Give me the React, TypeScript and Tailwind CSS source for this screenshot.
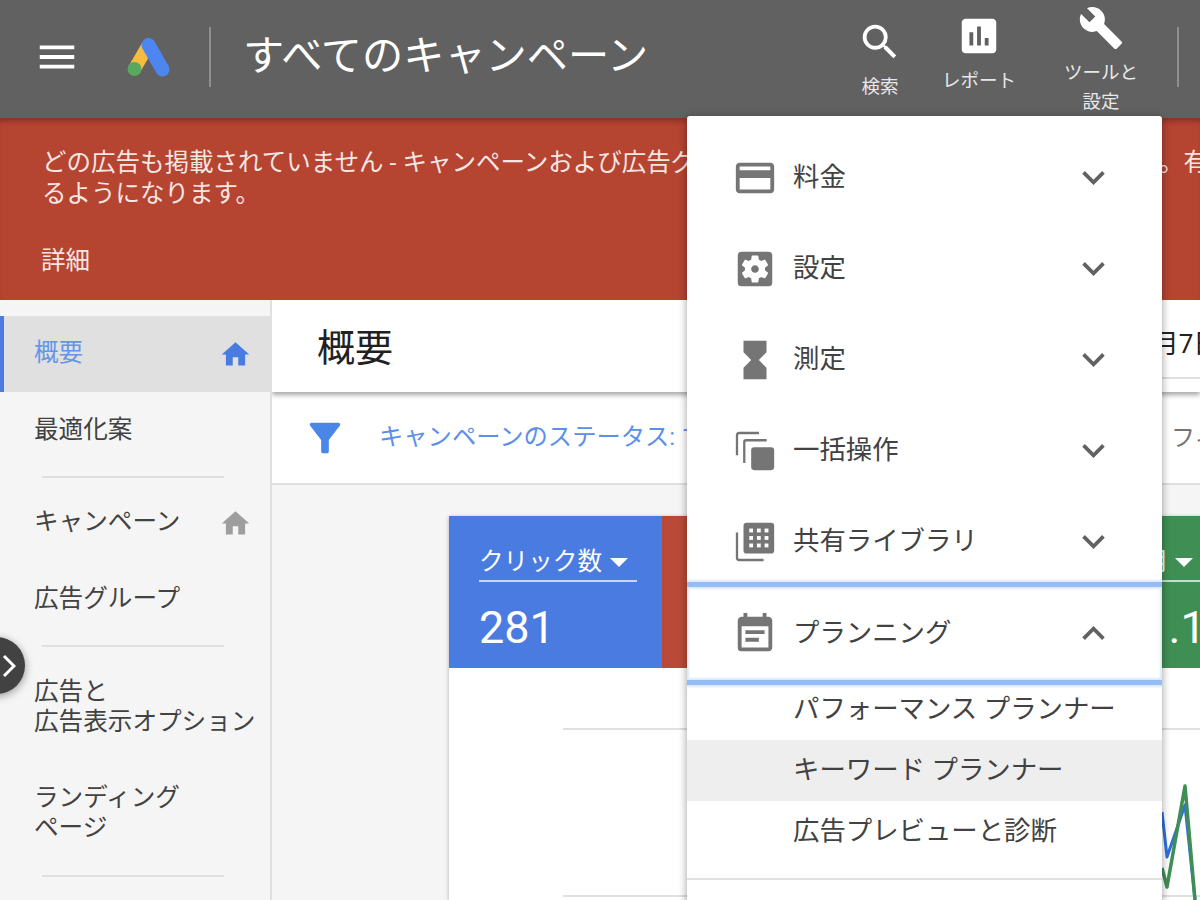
import type { ReactNode } from "react";
import {
  MdAssessment,
  MdBuild,
  MdCreditCard,
  MdEventNote,
  MdExpandLess,
  MdExpandMore,
  MdFilterAlt,
  MdHome,
  MdHourglassFull,
  MdMenu,
  MdSearch,
  MdSettingsApplications,
} from "react-icons/md";

function BulkIcon({ className }: { className?: string }) {
  return (
    <svg viewBox="0 0 24 24" className={className} fill="none" stroke="currentColor" strokeWidth="1.2">
      <path d="M2.6 14.2V3.6a1 1 0 0 1 1-1h10.5" />
      <path d="M6.4 18.2V7.4a1 1 0 0 1 1-1h10.7" />
      <rect x="10" y="10" width="12" height="12" rx="1.6" fill="currentColor" stroke="none" />
    </svg>
  );
}

function LibraryIcon({ className }: { className?: string }) {
  const dots = [9, 13, 17];
  const rows = [5, 8.9, 12.8];
  return (
    <svg viewBox="0 0 24 24" className={className} fill="none" stroke="currentColor" strokeWidth="1.2">
      <path d="M2.6 7v13.4a1 1 0 0 0 1 1H16.5" />
      <rect x="6" y="2" width="16" height="16" rx="1.6" fill="currentColor" stroke="none" />
      {rows.map((y) =>
        dots.map((x) => <rect key={`${x}-${y}`} x={x} y={y} width="2" height="2" fill="#fff" stroke="none" />),
      )}
    </svg>
  );
}

function AdsLogo() {
  return (
    <svg viewBox="0 0 43 39" className="ml-[47px] h-[39px] w-[43px] shrink-0">
      <path d="M21 7.5 7.5 31" stroke="#f4bc41" strokeWidth="13" fill="none" />
      <path d="M21.5 7 35.5 31.5" stroke="#4d86f0" strokeWidth="14" strokeLinecap="round" fill="none" />
      <circle cx="7.5" cy="31" r="7" fill="#5aa85d" />
    </svg>
  );
}

const headerTools = [
  { icon: <MdSearch className="h-[46px] w-[46px]" />, label: ["検索"], width: "w-[60px]", top: "pt-[19px]" },
  { icon: <MdAssessment className="h-[46px] w-[46px]" />, label: ["レポート"], width: "w-[90px] ml-[24px]", top: "pt-[13px]" },
  { icon: <MdBuild className="h-[46px] w-[46px]" />, label: ["ツールと", "設定"], width: "w-[100px] ml-[27px]", top: "pt-[5px]" },
];

const menuRows: { icon: ReactNode; label: string }[] = [
  { icon: <MdCreditCard className="h-[46px] w-[46px]" />, label: "料金" },
  { icon: <MdSettingsApplications className="h-[46px] w-[46px]" />, label: "設定" },
  { icon: <MdHourglassFull className="h-[46px] w-[46px]" />, label: "測定" },
  { icon: <BulkIcon className="h-[46px] w-[46px]" />, label: "一括操作" },
  { icon: <LibraryIcon className="h-[46px] w-[46px]" />, label: "共有ライブラリ" },
];

function Divider({ className }: { className: string }) {
  return <div className={`mx-[42px] h-[2px] w-[182px] bg-[#e0e0e0] ${className}`} />;
}

function Sidebar() {
  const rowClass = "flex h-[76px] items-center justify-between pl-[34px] pr-[18px] text-[24.6px] text-[#424242]";
  return (
    <aside className="h-full w-[272px] shrink-0 border-r-2 border-[#e0e0e0] bg-[#f5f5f5] pt-[16px]">
      <div className="flex h-[76px] items-center justify-between border-l-4 border-[#4a7be0] bg-[#e0e0e0] pb-[2px] pl-[30px] pr-[18px] text-[24.6px] text-[#6495ea]">
        概要
        <MdHome className="mt-[2px] h-[33px] w-[33px] text-[#4a7be0]" />
      </div>
      <div className={rowClass}>最適化案</div>
      <Divider className="mt-[8px]" />
      <div className="h-[7px]" />
      <div className={`${rowClass} pb-[1px]`}>
        キャンペーン
        <MdHome className="mt-[1px] h-[33px] w-[33px] text-[#9e9e9e]" />
      </div>
      <div className={rowClass}>広告グループ</div>
      <Divider className="mt-[8px]" />
      <div className="flex h-[112px] flex-col justify-center pl-[34px] pt-[8px] text-[24.6px] leading-[30px] text-[#424242]">
        <span>広告と</span>
        <span className="whitespace-nowrap">広告表示オプション</span>
      </div>
      <div className="flex h-[106px] flex-col justify-center pl-[34px] pt-[1px] text-[24.6px] leading-[30px] text-[#424242]">
        <span>ランディング</span>
        <span>ページ</span>
      </div>
      <Divider className="mt-[10px]" />
    </aside>
  );
}

function MetricTab({ bg, title, value }: { bg: string; title: string; value: string }) {
  return (
    <div className={`h-[152px] w-[213px] shrink-0 pl-[30px] pt-[28px] text-white ${bg}`}>
      <div className="flex h-[38px] w-[158px] items-center gap-[8px] border-b-2 border-white/70 text-[24.6px]">
        {title}
        <span className="h-0 w-0 border-x-[9px] border-t-[9px] border-x-transparent border-t-white" />
      </div>
      <div className="mt-[16px] text-[45px] leading-[60px]">{value}</div>
    </div>
  );
}

function Overview() {
  return (
    <main className="h-full min-w-0 flex-1 overflow-hidden bg-[#f5f5f5]">
      <div className="relative z-10 flex h-[92px] bg-white pl-[45px] shadow-[0_3px_5px_rgba(0,0,0,0.35)]">
        <h1 className="w-[722px] shrink-0 self-center pt-[4px] text-[38px] font-normal text-[#212121]">概要</h1>
        <div className="flex h-[79px] w-[300px] shrink-0 items-center whitespace-nowrap border-b-2 border-[#e0e0e0] pt-[11px] text-[26px] text-[#212121]">
          2018年11月7日
        </div>
      </div>
      <div className="flex h-[93px] items-center whitespace-nowrap border-b-2 border-[#e0e0e0] bg-white pl-[30px]">
        <MdFilterAlt className="h-[46px] w-[46px] shrink-0 text-[#4a86e8]" />
        <span className="ml-[31px] w-[792px] shrink-0 text-[24.3px] text-[#5b8fe8]">キャンペーンのステータス: すべて</span>
        <span className="text-[24px] text-[#757575]">フィルタ</span>
      </div>
      <div className="ml-[177px] mt-[31px] w-[852px] bg-white shadow-[0_1px_4px_rgba(0,0,0,0.3)]">
        <div className="flex">
          <MetricTab bg="bg-[#4a7be0]" title="クリック数" value="281" />
          <MetricTab bg="bg-[#b94a38]" title="表示回数" value="1.2万" />
          <MetricTab bg="bg-[#f4b400]" title="平均掲載順位" value="2.4" />
          <MetricTab bg="bg-[#3f8f55]" title="費用" value="11.1" />
        </div>
        <svg viewBox="0 0 852 232" className="block h-[232px] w-[852px]" fill="none">
          <path d="M114 61H852M114 228H852" stroke="#e0e0e0" strokeWidth="2" />
          <path d="M713 144 718 189 736 137 746 232" stroke="#2f6fde" strokeWidth="3" strokeLinejoin="round" />
          <path d="M713 200 718 219 736 118 746 232" stroke="#3f8f55" strokeWidth="3.5" strokeLinejoin="round" />
        </svg>
      </div>
    </main>
  );
}

function ToolsMenu() {
  return (
    <div className="absolute left-[687px] top-[116px] z-30 h-[800px] w-[475px] overflow-hidden rounded-[3px] bg-white pt-[16px] text-[26.4px] text-[#424242] shadow-[0_2px_8px_rgba(0,0,0,0.4)]">
      {menuRows.map((row) => (
        <div key={row.label} className="flex h-[91px] items-center pl-[45px] pr-[46px]">
          <span className="shrink-0 text-[#757575]">{row.icon}</span>
          <span className="ml-[15px] flex-1">{row.label}</span>
          <MdExpandMore className="h-[45px] w-[45px] text-[#616161]" />
        </div>
      ))}
      <div className="relative z-10 flex h-[93px] items-center bg-white pl-[45px] pr-[46px] shadow-[0_0_0_5px_#94bdf6,0_0_2px_7px_#dce9fb,inset_0_0_2px_2px_#dce9fb]">
        <MdEventNote className="h-[46px] w-[46px] shrink-0 text-[#757575]" />
        <span className="ml-[15px] flex-1">プランニング</span>
        <MdExpandLess className="h-[45px] w-[45px] text-[#616161]" />
      </div>
      <div className="flex h-[60px] items-center whitespace-pre pl-[106px]">パフォーマンス プランナー</div>
      <div className="flex h-[61px] items-center whitespace-pre bg-[#eeeeee] pl-[106px]">キーワード プランナー</div>
      <div className="flex h-[61px] items-center pl-[106px]">広告プレビューと診断</div>
      <div className="mt-[16px] h-[2px] bg-[#e0e0e0]" />
    </div>
  );
}

export default function App() {
  return (
    <div className="relative flex h-[900px] w-[1200px] flex-col overflow-hidden bg-[#f5f5f5] font-[Roboto,'Noto_Sans_CJK_JP',sans-serif]">
      <header className="relative z-20 flex h-[118px] shrink-0 items-start bg-[#616161] text-white">
        <div className="flex h-[114px] items-center pl-[34px]">
          <MdMenu className="h-[46px] w-[46px] shrink-0" />
          <AdsLogo />
          <div className="ml-[39px] h-[60px] w-[2px] bg-[#8f8f8f]" />
          <div className="ml-[32px] whitespace-nowrap text-[41.2px]">すべてのキャンペーン</div>
        </div>
        <div className="ml-auto flex items-start pr-[21px]">
          {headerTools.map((tool) => (
            <div key={tool.label[0]} className={`flex flex-col items-center ${tool.width} ${tool.top}`}>
              {tool.icon}
              <div className="mt-[8px] text-center text-[18.5px] leading-[29px] text-[#e8e8e8]">
                {tool.label.map((line) => (
                  <div key={line} className="whitespace-nowrap">{line}</div>
                ))}
              </div>
            </div>
          ))}
          <div className="ml-[26px] mt-[27px] h-[60px] w-[2px] bg-[#8f8f8f]" />
        </div>
      </header>

      <section className="h-[182px] shrink-0 overflow-hidden whitespace-nowrap bg-[#b54431] pl-[42px] pt-[29px] text-[24.5px] leading-[31px] text-[#f5e6e3] shadow-[inset_0_6px_6px_-4px_rgba(0,0,0,0.35)]">
        <div>どの広告も掲載されていません - キャンペーンおよび広告グループ がすべて一時停止中になっています。有効にすると広告が掲載され</div>
        <div>るようになります。</div>
        <div className="-ml-[1px] mt-[36px]">詳細</div>
      </section>

      <div className="flex min-h-0 flex-1">
        <Sidebar />
        <Overview />
      </div>

      <ToolsMenu />

      <button className="absolute -left-[32px] top-[637px] z-20 flex h-[57px] w-[57px] items-center justify-end rounded-full bg-[#424242] pr-[9px] shadow-[0_2px_8px_rgba(0,0,0,0.4)]">
        <svg viewBox="0 0 14 24" className="h-[24px] w-[14px]" fill="none" stroke="#fff" strokeWidth="3">
          <path d="M2 2 12 12 2 22" />
        </svg>
      </button>
    </div>
  );
}
